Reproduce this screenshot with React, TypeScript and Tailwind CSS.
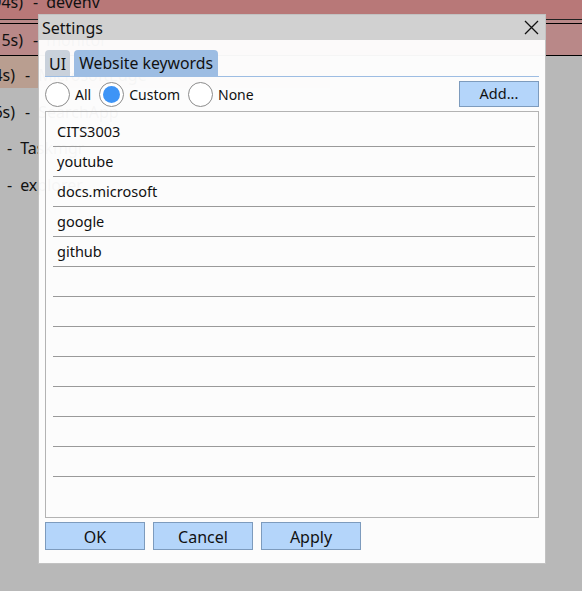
import { useState } from "react";

const keywords = ["CITS3003", "youtube", "docs.microsoft", "google", "github"];

function Radio({
  label,
  checked,
  onClick,
}: {
  label: string;
  checked: boolean;
  onClick: () => void;
}) {
  return (
    <button onClick={onClick} className="flex items-center gap-[5px]">
      <span className="flex h-[25px] w-[25px] items-center justify-center rounded-full border border-[#8c8c8c] bg-white">
        {checked && (
          <span className="h-[17px] w-[17px] rounded-full bg-[#3d94f6]" />
        )}
      </span>
      <span className="text-[14px] text-[#111]">{label}</span>
    </button>
  );
}

// one line of the process list behind the dialog; the time ends at x = end
function BgLine({ end, time, name }: { end: number; time?: string; name: string }) {
  return (
    <div className="flex items-center whitespace-nowrap">
      {time && (
        <div className="flex shrink-0 justify-end" style={{ width: end }}>
          <span>{time}</span>
        </div>
      )}
      <span className={time ? "ml-[10px]" : "ml-[7px]"}>-</span>
      <span className="ml-[8px]">{name}</span>
    </div>
  );
}

export default function App() {
  const [mode, setMode] = useState("Custom");
  const [tab, setTab] = useState(1);

  return (
    <div
      className="relative h-[591px] w-[582px] overflow-hidden bg-[#b8b8b8] text-[16px] text-[#111]"
      style={{ fontFamily: "'Noto Sans', sans-serif" }}
    >
      {/* process list behind the dialog */}
      <div className="flex h-[19px] items-end overflow-hidden bg-[#b87878] leading-[19px]">
        <div className="mb-[7px]">
          <BgLine end={23} time="(0.94s)" name="devenv" />
        </div>
      </div>
      <div className="h-px bg-[#222]" />
      <div className="h-[3px] bg-[#b98989]" />
      <div className="h-px bg-black" />
      <div className="flex h-[31px] items-center bg-[#b98888] pt-[1px]">
        <BgLine end={23} time="(1.15s)" name="monitor" />
      </div>
      <div className="h-px bg-black" />
      <div className="flex h-[32px] w-[330px] items-center bg-[#b99e90] pt-[6px]">
        <BgLine end={15} time="(4s)" name="MicrosoftEdge" />
      </div>
      <div className="flex h-[37px] items-center pt-[11px]">
        <BgLine end={15} time="(6s)" name="SearchApp" />
      </div>
      <div className="flex h-[37px] items-center pt-[8px]">
        <BgLine end={0} name="Taskmgr" />
      </div>
      <div className="flex h-[37px] items-center pt-[8px]">
        <BgLine end={0} name="explorer" />
      </div>

      {/* Settings dialog */}
      <div className="absolute left-[38px] top-[14px] flex h-[550px] w-[508px] flex-col border border-[#c2c2c2] bg-white/[0.96]">
        <div className="flex h-[25px] shrink-0 items-center justify-between bg-[#d1d1d1] pl-[3px] pr-[6px]">
          <span className="text-[16px]">Settings</span>
          <svg width="15" height="15" viewBox="0 0 15 15">
            <path d="M1 1 L14 14 M14 1 L1 14" stroke="#111" strokeWidth="1.3" />
          </svg>
        </div>

        <div className="flex flex-1 flex-col px-[6px] pt-[10px]">
          <div className="flex h-[26px] items-end gap-[4px]">
            <button
              onClick={() => setTab(0)}
              className={`h-[26px] rounded-t-[4px] px-[4px] pt-[2px] text-[16px] ${
                tab === 0 ? "bg-[#9dbde3]" : "bg-[#c9d1db]"
              }`}
            >
              UI
            </button>
            <button
              onClick={() => setTab(1)}
              className={`h-[26px] rounded-t-[4px] px-[5px] pt-[2px] text-[15.8px] ${
                tab === 1 ? "bg-[#9dbde3]" : "bg-[#c9d1db]"
              }`}
            >
              Website keywords
            </button>
          </div>
          <div className="h-px bg-[#9dbde3]" />

          <div className="mt-[4px] flex h-[26px] items-center gap-[8px]">
            {["All", "Custom", "None"].map((m) => (
              <Radio
                key={m}
                label={m}
                checked={mode === m}
                onClick={() => setMode(m)}
              />
            ))}
            <button className="ml-auto h-[26px] w-[80px] border border-[#7d9bbd] bg-[#b4d5fa] text-[14.5px]">
              Add...
            </button>
          </div>

          <div className="mt-[4px] h-[407px] border border-[#b3b3b3] pl-[7px] pr-[3px] pt-[5px]">
            {Array.from({ length: 12 }).map((_, i) => (
              <div
                key={i}
                className="flex h-[30px] items-center border-b border-[#9a9a9a] pl-[4px] text-[14.5px]"
              >
                {keywords[i] ?? ""}
              </div>
            ))}
          </div>

          <div className="mt-[4px] flex gap-[8px]">
            {["OK", "Cancel", "Apply"].map((b) => (
              <button
                key={b}
                className="h-[28px] w-[100px] border border-[#7d9bbd] bg-[#b4d5fa] pt-[1px] text-[16px]"
              >
                {b}
              </button>
            ))}
          </div>
        </div>
      </div>
    </div>
  );
}
